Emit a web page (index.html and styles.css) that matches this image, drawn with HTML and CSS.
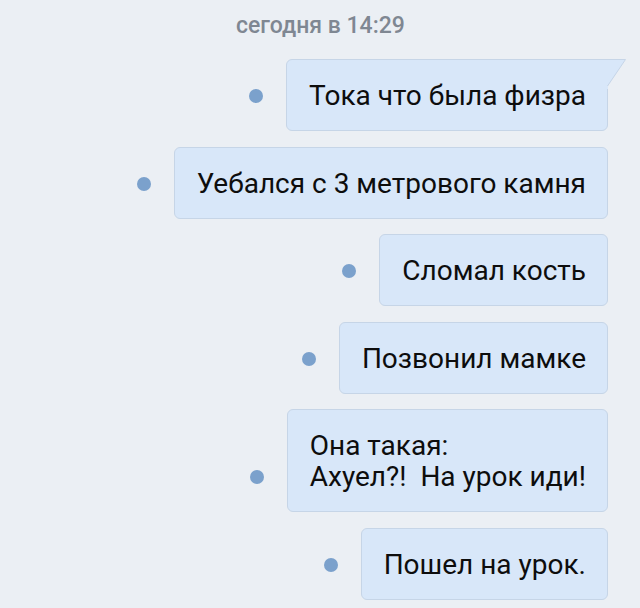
FILE: index.html
```html
<!DOCTYPE html>
<html lang="ru">
<head>
<meta charset="utf-8">
<link rel="stylesheet" href="styles.css">
</head>
<body>
<div class="chat">
  <div class="time">сегодня в 14:29</div>
  <div class="messages">
    <div class="row">
      <span class="dot"></span>
      <div class="bubble first">Тока что была физра
        <svg class="tail" width="22" height="30" viewBox="0 0 22 30"><path d="M0 0.5 H18.5 L1 27 V30 H0 Z" fill="#d8e7f9"/><path d="M0 0.5 H18.5 L0.5 27" fill="none" stroke="#c6d5e7" stroke-width="1"/></svg>
      </div>
    </div>
    <div class="row">
      <span class="dot"></span>
      <div class="bubble">Уебался с 3 метрового камня</div>
    </div>
    <div class="row">
      <span class="dot"></span>
      <div class="bubble">Сломал кость</div>
    </div>
    <div class="row">
      <span class="dot"></span>
      <div class="bubble">Позвонил мамке</div>
    </div>
    <div class="row">
      <span class="dot"></span>
      <div class="bubble">Она такая:<br>Ахуел?!&nbsp; На урок иди!</div>
    </div>
    <div class="row">
      <span class="dot"></span>
      <div class="bubble">Пошел на урок.</div>
    </div>
  </div>
</div>
</body>
</html>
```

FILE: styles.css
```css
html, body {
  margin: 0;
  padding: 0;
  background: #ebeff4;
}
.chat {
  width: 640px;
  height: 608px;
  overflow: hidden;
  font-family: Roboto, "Noto Sans", sans-serif;
}
.time {
  padding-left: 236px;
  padding-top: 14px;
  height: 59px;
  box-sizing: border-box;
  font-size: 23px;
  line-height: 23px;
  font-weight: 500;
  color: #7f8792;
}
.messages {
  display: flex;
  flex-direction: column;
  align-items: flex-end;
  gap: 15.6px;
  padding-right: 32px;
}
.row {
  display: flex;
  align-items: flex-end;
  gap: 23px;
}
.dot {
  width: 14px;
  height: 14px;
  border-radius: 50%;
  background: #7ba1cc;
  margin-bottom: 28px;
}
.bubble {
  position: relative;
  background: #d8e7f9;
  border: 1px solid #c6d5e7;
  border-radius: 6px;
  padding: 20px 21px 19px 22px;
  font-size: 28px;
  line-height: 31px;
  color: #0d0d0d;
}
.bubble.first {
  border-top-right-radius: 0;
}
.tail {
  position: absolute;
  top: -1px;
  left: 100%;
  display: block;
}
```
